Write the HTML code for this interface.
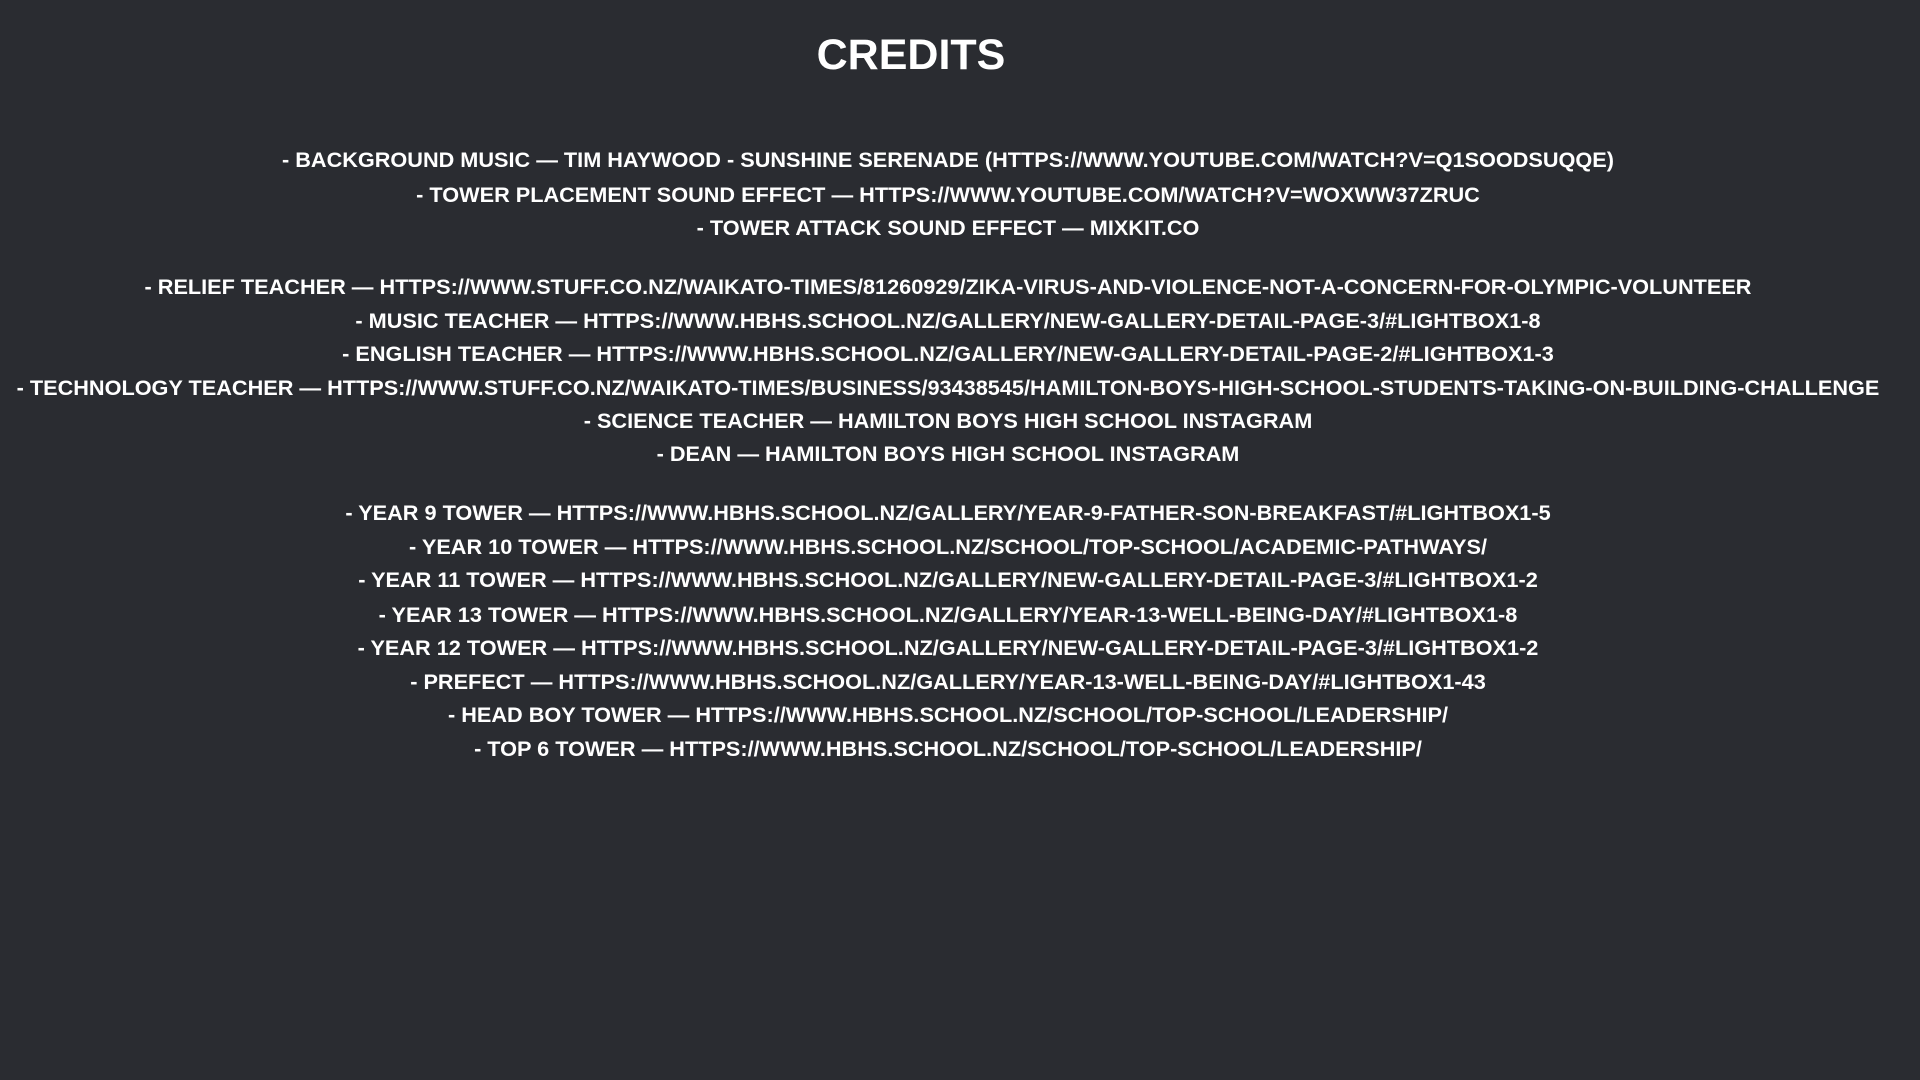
<!DOCTYPE html>
<html><head><meta charset="utf-8"><style>
html,body{margin:0;width:1920px;height:1080px;background:#2a2c31;overflow:hidden}
.t{position:absolute;left:-12px;width:1920px;text-align:center;color:#fff;font-family:"Liberation Sans",sans-serif;font-weight:bold;text-transform:uppercase;white-space:nowrap}
.l{font-size:21.7px;line-height:34px;height:34px}
h1{position:absolute;left:-49px;width:1920px;top:26px;margin:0;text-align:center;color:#fff;font-family:"Liberation Sans",sans-serif;font-size:43px;line-height:58px;font-weight:bold;text-transform:uppercase}
</style></head><body>
<h1>Credits</h1>
<div class="t l" style="top:143px">- Background Music — Tim Haywood - Sunshine Serenade (https://www.youtube.com/watch?v=Q1SOoDSuqQE)</div>
<div class="t l" style="top:178px">- Tower Placement Sound Effect — https://www.youtube.com/watch?v=WOxWW37zRuc</div>
<div class="t l" style="top:211px">- Tower Attack Sound Effect — mixkit.co</div>
<div class="t l" style="top:270px">- Relief Teacher — https://www.stuff.co.nz/waikato-times/81260929/zika-virus-and-violence-not-a-concern-for-olympic-volunteer</div>
<div class="t l" style="top:304px">- Music Teacher — https://www.hbhs.school.nz/gallery/new-gallery-detail-page-3/#lightbox1-8</div>
<div class="t l" style="top:337px">- English Teacher — https://www.hbhs.school.nz/gallery/new-gallery-detail-page-2/#lightbox1-3</div>
<div class="t l" style="top:371px">- Technology Teacher — https://www.stuff.co.nz/waikato-times/business/93438545/hamilton-boys-high-school-students-taking-on-building-challenge</div>
<div class="t l" style="top:404px">- Science Teacher — Hamilton Boys High School Instagram</div>
<div class="t l" style="top:437px">- Dean — Hamilton Boys High School Instagram</div>
<div class="t l" style="top:496px">- Year 9 Tower — https://www.hbhs.school.nz/gallery/year-9-father-son-breakfast/#lightbox1-5</div>
<div class="t l" style="top:530px">- Year 10 Tower — https://www.hbhs.school.nz/school/top-school/academic-pathways/</div>
<div class="t l" style="top:563px">- Year 11 Tower — https://www.hbhs.school.nz/gallery/new-gallery-detail-page-3/#lightbox1-2</div>
<div class="t l" style="top:598px">- Year 13 Tower — https://www.hbhs.school.nz/gallery/year-13-well-being-day/#lightbox1-8</div>
<div class="t l" style="top:631px">- Year 12 Tower — https://www.hbhs.school.nz/gallery/new-gallery-detail-page-3/#lightbox1-2</div>
<div class="t l" style="top:665px">- Prefect — https://www.hbhs.school.nz/gallery/year-13-well-being-day/#lightbox1-43</div>
<div class="t l" style="top:698px">- Head Boy Tower — https://www.hbhs.school.nz/school/top-school/leadership/</div>
<div class="t l" style="top:732px">- Top 6 Tower — https://www.hbhs.school.nz/school/top-school/leadership/</div>
</body></html>
